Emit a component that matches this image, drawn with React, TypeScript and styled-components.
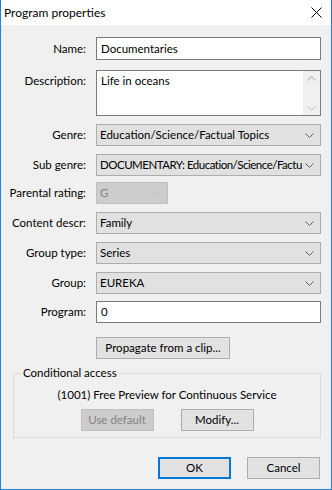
import React from "react";
import styled, { createGlobalStyle } from "styled-components";

const GlobalStyle = createGlobalStyle`
  html, body { margin: 0; padding: 0; background: #f0f0f0; }
  body { font-family: Lato, "Noto Sans", "Liberation Sans", sans-serif; font-size: 11.5px; color: #000; }
  * { box-sizing: border-box; }
`;

const Window = styled.div`
  width: 332px;
  height: 490px;
  background: #f0f0f0;
  border: 1px solid #1883d7;
  border-top: none;
  display: flex;
  flex-direction: column;
`;

const TitleBar = styled.div`
  height: 25px;
  background: #fff;
  display: flex;
  align-items: center;
  justify-content: space-between;
  padding: 0 9px 0 3px;
`;

const Title = styled.span`
  font-size: 12px;
  line-height: 16px;
  color: #000;
`;

const Content = styled.div`
  padding: 12px 10px 0 0;
  display: flex;
  flex-direction: column;
`;

const Row = styled.div<{ $mt?: number; $top?: boolean }>`
  display: grid;
  grid-template-columns: 85px 1fr;
  column-gap: 10px;
  align-items: ${(p) => (p.$top ? "start" : "center")};
  margin-top: ${(p) => p.$mt ?? 0}px;
`;

const Label = styled.label<{ $pt?: number }>`
  text-align: right;
  white-space: nowrap;
  line-height: 16px;
  padding-top: ${(p) => p.$pt ?? 0}px;
`;

const Edit = styled.div<{ $h?: number }>`
  height: ${(p) => p.$h ?? 22}px;
  background: #fff;
  border: 1px solid #7a7a7a;
  padding: 0 4px;
  display: flex;
  align-items: center;
  line-height: 16px;
`;

const Memo = styled.div`
  height: 46px;
  background: #fff;
  border: 1px solid #7a7a7a;
  display: flex;
`;

const MemoText = styled.div`
  flex: 1;
  padding: 2px 4px;
  line-height: 16px;
`;

const ScrollTrack = styled.div`
  width: 17px;
  background: #f0f0f0;
  display: flex;
  flex-direction: column;
  justify-content: space-between;
  align-items: center;
  padding: 5px 0 4px;
`;

const Combo = styled.div<{ $disabled?: boolean; $w?: number }>`
  height: 22px;
  width: ${(p) => (p.$w ? `${p.$w}px` : "auto")};
  background: ${(p) => (p.$disabled ? "#cccccc" : "#e1e1e1")};
  border: 1px solid ${(p) => (p.$disabled ? "#bfbfbf" : "#adadad")};
  color: ${(p) => (p.$disabled ? "#838383" : "#000")};
  display: flex;
  align-items: center;
  padding: 0 6px 0 3px;
  overflow: hidden;
`;

const ComboText = styled.span<{ $tight?: boolean }>`
  flex: 1;
  min-width: 0;
  white-space: nowrap;
  line-height: 16px;
  letter-spacing: ${(p) => (p.$tight ? "-0.5px" : "normal")};
`;

const Button = styled.div<{ $w?: number; $disabled?: boolean; $default?: boolean }>`
  width: ${(p) => p.$w ?? 73}px;
  height: 22px;
  background: ${(p) => (p.$disabled ? "#cccccc" : "#e1e1e1")};
  border: ${(p) =>
    p.$default ? "2px solid #0078d7" : p.$disabled ? "1px solid #bfbfbf" : "1px solid #adadad"};
  color: ${(p) => (p.$disabled ? "#838383" : "#000")};
  display: flex;
  align-items: center;
  justify-content: center;
  line-height: 16px;
  white-space: nowrap;
`;

const ButtonCell = styled.div`
  grid-column: 2;
`;

const GroupBox = styled.div`
  position: relative;
  margin: 14px 0 0 12px;
  border: 1px solid #dcdcdc;
  padding: 13px 0 6px;
  display: flex;
  flex-direction: column;
  align-items: center;
  gap: 7px;
`;

const Legend = styled.span`
  position: absolute;
  top: -9px;
  left: 7px;
  padding: 0 2px;
  background: #f0f0f0;
  line-height: 16px;
`;

const InfoText = styled.div`
  line-height: 15px;
`;

const ButtonRow = styled.div<{ $gap: number; $justify: string }>`
  display: flex;
  gap: ${(p) => p.$gap}px;
  justify-content: ${(p) => p.$justify};
`;

const Footer = styled(ButtonRow)`
  margin: 19px 1px 0 0;
`;

const Chevron = ({ color = "#606060" }: { color?: string }) => (
  <svg width="9" height="5" viewBox="0 0 9 5" style={{ display: "block", flex: "none" }}>
    <path d="M0.5 0.5 L4.5 4.5 L8.5 0.5" fill="none" stroke={color} strokeWidth="1" />
  </svg>
);

const UpChevron = () => (
  <svg width="9" height="5" viewBox="0 0 9 5" style={{ display: "block" }}>
    <path d="M0.5 4.5 L4.5 0.5 L8.5 4.5" fill="none" stroke="#c0c0c0" strokeWidth="1.2" />
  </svg>
);

const CloseIcon = () => (
  <svg width="11" height="11" viewBox="0 0 11 11" style={{ display: "block" }}>
    <path d="M0.5 0.5 L10.5 10.5 M10.5 0.5 L0.5 10.5" stroke="#000" strokeWidth="1" />
  </svg>
);

export default function App() {
  return (
    <>
      <GlobalStyle />
      <Window>
        <TitleBar>
          <Title>Program properties</Title>
          <CloseIcon />
        </TitleBar>
        <Content>
          <Row>
            <Label>Name:</Label>
            <Edit $h={23}>Documentaries</Edit>
          </Row>
          <Row $mt={10} $top>
            <Label $pt={3}>Description:</Label>
            <Memo>
              <MemoText>Life in oceans</MemoText>
              <ScrollTrack>
                <UpChevron />
                <Chevron color="#c0c0c0" />
              </ScrollTrack>
            </Memo>
          </Row>
          <Row $mt={8}>
            <Label>Genre:</Label>
            <Combo>
              <ComboText>Education/Science/Factual Topics</ComboText>
              <Chevron />
            </Combo>
          </Row>
          <Row $mt={8}>
            <Label>Sub genre:</Label>
            <Combo>
              <ComboText $tight>DOCUMENTARY: Education/Science/Factu</ComboText>
              <Chevron />
            </Combo>
          </Row>
          <Row $mt={6}>
            <Label>Parental rating:</Label>
            <Combo $disabled $w={72}>
              <ComboText>G</ComboText>
              <Chevron color="#bcbcbc" />
            </Combo>
          </Row>
          <Row $mt={8}>
            <Label>Content descr:</Label>
            <Combo>
              <ComboText>Family</ComboText>
              <Chevron />
            </Combo>
          </Row>
          <Row $mt={8}>
            <Label>Group type:</Label>
            <Combo>
              <ComboText>Series</ComboText>
              <Chevron />
            </Combo>
          </Row>
          <Row $mt={8}>
            <Label>Group:</Label>
            <Combo>
              <ComboText>EUREKA</ComboText>
              <Chevron />
            </Combo>
          </Row>
          <Row $mt={7}>
            <Label>Program:</Label>
            <Edit>0</Edit>
          </Row>
          <Row $mt={14}>
            <ButtonCell>
              <Button $w={134}>Propagate from a clip...</Button>
            </ButtonCell>
          </Row>
          <GroupBox>
            <Legend>Conditional access</Legend>
            <InfoText>(1001) Free Preview for Continuous Service</InfoText>
            <ButtonRow $gap={27} $justify="center">
              <Button $disabled>Use default</Button>
              <Button>Modify...</Button>
            </ButtonRow>
          </GroupBox>
          <Footer $gap={16} $justify="flex-end">
            <Button $default>OK</Button>
            <Button>Cancel</Button>
          </Footer>
        </Content>
      </Window>
    </>
  );
}
